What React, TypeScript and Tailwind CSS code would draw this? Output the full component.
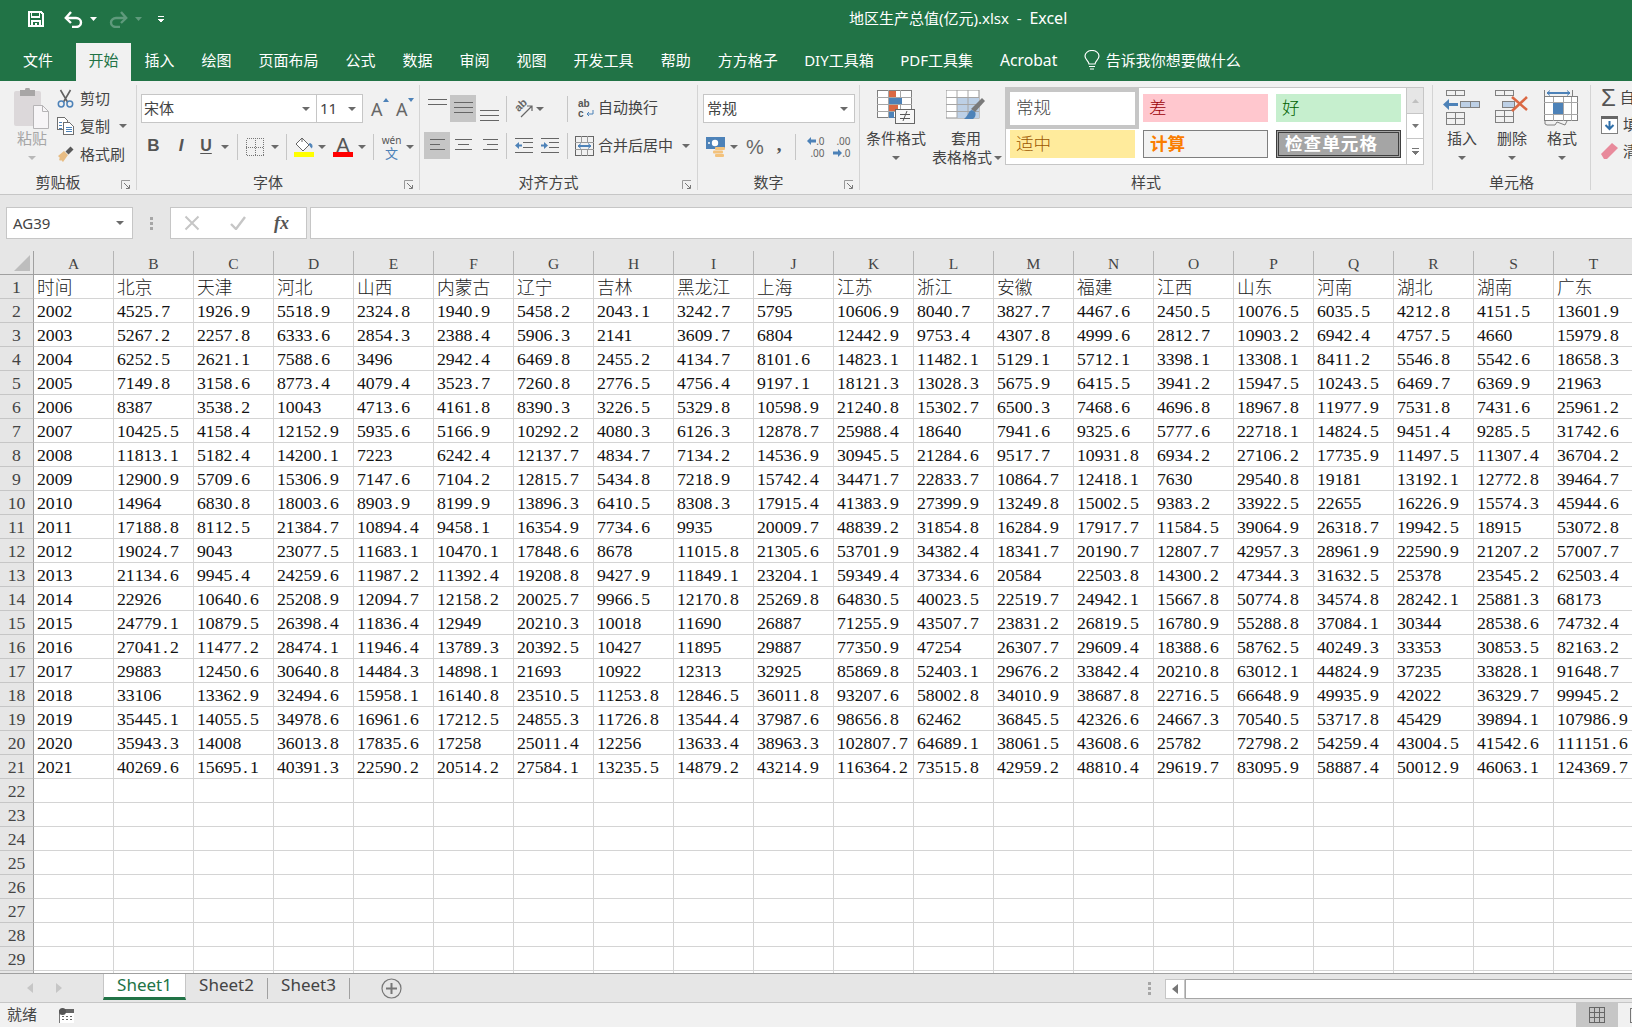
import React from "react";

const COLS = "ABCDEFGHIJKLMNOPQRST".split("");
const HEAD = "时间 北京 天津 河北 山西 内蒙古 辽宁 吉林 黑龙江 上海 江苏 浙江 安徽 福建 江西 山东 河南 湖北 湖南 广东".split(" ");
const DATA = `2002 4525.7 1926.9 5518.9 2324.8 1940.9 5458.2 2043.1 3242.7 5795 10606.9 8040.7 3827.7 4467.6 2450.5 10076.5 6035.5 4212.8 4151.5 13601.9
2003 5267.2 2257.8 6333.6 2854.3 2388.4 5906.3 2141 3609.7 6804 12442.9 9753.4 4307.8 4999.6 2812.7 10903.2 6942.4 4757.5 4660 15979.8
2004 6252.5 2621.1 7588.6 3496 2942.4 6469.8 2455.2 4134.7 8101.6 14823.1 11482.1 5129.1 5712.1 3398.1 13308.1 8411.2 5546.8 5542.6 18658.3
2005 7149.8 3158.6 8773.4 4079.4 3523.7 7260.8 2776.5 4756.4 9197.1 18121.3 13028.3 5675.9 6415.5 3941.2 15947.5 10243.5 6469.7 6369.9 21963
2006 8387 3538.2 10043 4713.6 4161.8 8390.3 3226.5 5329.8 10598.9 21240.8 15302.7 6500.3 7468.6 4696.8 18967.8 11977.9 7531.8 7431.6 25961.2
2007 10425.5 4158.4 12152.9 5935.6 5166.9 10292.2 4080.3 6126.3 12878.7 25988.4 18640 7941.6 9325.6 5777.6 22718.1 14824.5 9451.4 9285.5 31742.6
2008 11813.1 5182.4 14200.1 7223 6242.4 12137.7 4834.7 7134.2 14536.9 30945.5 21284.6 9517.7 10931.8 6934.2 27106.2 17735.9 11497.5 11307.4 36704.2
2009 12900.9 5709.6 15306.9 7147.6 7104.2 12815.7 5434.8 7218.9 15742.4 34471.7 22833.7 10864.7 12418.1 7630 29540.8 19181 13192.1 12772.8 39464.7
2010 14964 6830.8 18003.6 8903.9 8199.9 13896.3 6410.5 8308.3 17915.4 41383.9 27399.9 13249.8 15002.5 9383.2 33922.5 22655 16226.9 15574.3 45944.6
2011 17188.8 8112.5 21384.7 10894.4 9458.1 16354.9 7734.6 9935 20009.7 48839.2 31854.8 16284.9 17917.7 11584.5 39064.9 26318.7 19942.5 18915 53072.8
2012 19024.7 9043 23077.5 11683.1 10470.1 17848.6 8678 11015.8 21305.6 53701.9 34382.4 18341.7 20190.7 12807.7 42957.3 28961.9 22590.9 21207.2 57007.7
2013 21134.6 9945.4 24259.6 11987.2 11392.4 19208.8 9427.9 11849.1 23204.1 59349.4 37334.6 20584 22503.8 14300.2 47344.3 31632.5 25378 23545.2 62503.4
2014 22926 10640.6 25208.9 12094.7 12158.2 20025.7 9966.5 12170.8 25269.8 64830.5 40023.5 22519.7 24942.1 15667.8 50774.8 34574.8 28242.1 25881.3 68173
2015 24779.1 10879.5 26398.4 11836.4 12949 20210.3 10018 11690 26887 71255.9 43507.7 23831.2 26819.5 16780.9 55288.8 37084.1 30344 28538.6 74732.4
2016 27041.2 11477.2 28474.1 11946.4 13789.3 20392.5 10427 11895 29887 77350.9 47254 26307.7 29609.4 18388.6 58762.5 40249.3 33353 30853.5 82163.2
2017 29883 12450.6 30640.8 14484.3 14898.1 21693 10922 12313 32925 85869.8 52403.1 29676.2 33842.4 20210.8 63012.1 44824.9 37235 33828.1 91648.7
2018 33106 13362.9 32494.6 15958.1 16140.8 23510.5 11253.8 12846.5 36011.8 93207.6 58002.8 34010.9 38687.8 22716.5 66648.9 49935.9 42022 36329.7 99945.2
2019 35445.1 14055.5 34978.6 16961.6 17212.5 24855.3 11726.8 13544.4 37987.6 98656.8 62462 36845.5 42326.6 24667.3 70540.5 53717.8 45429 39894.1 107986.9
2020 35943.3 14008 36013.8 17835.6 17258 25011.4 12256 13633.4 38963.3 102807.7 64689.1 38061.5 43608.6 25782 72798.2 54259.4 43004.5 41542.6 111151.6
2021 40269.6 15695.1 40391.3 22590.2 20514.2 27584.1 13235.5 14879.2 43214.9 116364.2 73515.8 42959.2 48810.4 29619.7 83095.9 58887.4 50012.9 46063.1 124369.7`
  .split("\n")
  .map((r) => r.split(" "));
const ROWS: string[][] = [HEAD, ...DATA, ...Array.from({ length: 9 }, () => Array(20).fill(""))];

const Caret = ({ c = "#6a6a6a" }: { c?: string }) => (
  <svg width="8" height="4" viewBox="0 0 8 4" className="shrink-0"><path d="M0 0h8L4 4z" fill={c} /></svg>
);

const Lines = ({ w = 19, y = [0, 5, 10], lens }: { w?: number; y?: number[]; lens?: number[][] }) => (
  <svg width="19" height="14" viewBox="0 0 19 14" shapeRendering="crispEdges">
    {y.map((v, i) => {
      const [a, b] = lens ? lens[i] : [0, w];
      return <rect key={i} x={a} y={v} width={b - a} height="1" fill="#666" />;
    })}
  </svg>
);

const Launcher = () => (
  <svg width="10" height="10" viewBox="0 0 10 10" className="absolute right-[5px] top-[6px]">
    <path d="M0.5 9V0.5H9" fill="none" stroke="#999" />
    <path d="M3 3l5 5M8.5 5v3.5H5" fill="none" stroke="#777" />
  </svg>
);

const Group = ({ label, cls, launcher, children }: { label: string; cls: string; launcher?: boolean; children: React.ReactNode }) => (
  <div className={`${cls} h-[105px] flex flex-col shrink-0 border-r border-[#d4d4d4]`}>
    <div className="h-[89px]">{children}</div>
    <div className={`relative h-[16px] flex items-center justify-center text-[15px] leading-none text-[#444] ${launcher ? "pr-[20px]" : ""}`}>
      {label}
      {launcher && <Launcher />}
    </div>
  </div>
);

const Sep = ({ cls }: { cls: string }) => <div className={`${cls} w-px h-[26px] bg-[#c6c6c6] shrink-0`} />;

const CELL_FONT = "font-['Liberation_Serif','Noto_Sans_CJK_SC',serif]";

const Num = ({ v }: { v: string }) => {
  if (!/^[\d.]+$/.test(v)) return <span className="inline-block translate-y-px font-light text-[#222]">{v}</span>;
  const [a, b] = v.split(".");
  return (
    <span>
      {a.split("").map((d, i) => (
        <span key={i} className="inline-block w-[8.85px]">{d}</span>
      ))}
      {b !== undefined && <span className="inline-block w-[8.85px] pl-[2px]">.</span>}
      {b !== undefined && <span className="inline-block w-[8.85px]">{b}</span>}
    </span>
  );
};

const StyleCell = ({ text, cls }: { text: string; cls: string }) => (
  <div className={`${cls} flex items-center pl-[6px] text-[17.6px] ${CELL_FONT}`}>{text}</div>
);

const BigBtn = ({ icon, cls, children }: { icon: React.ReactNode; cls: string; children: React.ReactNode }) => (
  <div className={`${cls} flex flex-col items-center text-[15px] leading-[19px] text-[#444]`}>
    <div className="h-[44px] flex items-start justify-center pt-[5px]">{icon}</div>
    {children}
  </div>
);

const Tab = ({ t, cls = "px-[13.5px] text-[15px]" }: { t: string; cls?: string }) => (
  <div className={`${cls} h-full flex items-center justify-center text-white pb-[3px] whitespace-nowrap`}>{t}</div>
);

export default function App() {
  return (
    <div className="w-[1632px] h-[1027px] overflow-hidden bg-[#e6e6e6] flex flex-col font-['Noto_Sans','Noto_Sans_CJK_SC',sans-serif] text-[#444]">
      {/* title */}
      <div className="h-[43px] bg-[#217346] flex items-start shrink-0">
        <div className="w-[849px] h-[38px] flex items-center shrink-0 pl-[28px]">
          <svg width="16" height="16" viewBox="0 0 16 16" shapeRendering="crispEdges">
            <path fillRule="evenodd" fill="#fff" d="M0 0h13l3 3v13H0zM2 2v12h1V9h10v5h1V4l-2-2v5H3V2zM5 11v3h6v-3zM4 2v3h7V2z" />
            <rect x="7" y="11.5" width="2" height="2.5" fill="#fff" />
          </svg>
          <svg width="19" height="17" viewBox="0 0 19 17" className="ml-[20px]" fill="none" stroke="#fff" strokeWidth="2.4">
            <path d="M2 7h10a5 4.5 0 0 1 0 9H8" />
            <path d="M7 1L1.8 7 7 12" />
          </svg>
          <div className="ml-[7px]"><svg width="7" height="4" viewBox="0 0 7 4"><path d="M0 0h7L3.5 4z" fill="#fff" /></svg></div>
          <svg width="19" height="17" viewBox="0 0 19 17" className="ml-[12px]" fill="none" stroke="#5f9a7c" strokeWidth="2.4">
            <path d="M17 7H7a5 4.5 0 0 0 0 9h4" />
            <path d="M12 1l5.2 6L12 12" />
          </svg>
          <div className="ml-[7px]"><svg width="7" height="4" viewBox="0 0 7 4"><path d="M0 0h7L3.5 4z" fill="#5f9a7c" /></svg></div>
          <svg width="6" height="7" viewBox="0 0 6 7" className="ml-[16px]" shapeRendering="crispEdges"><path d="M0 0h6v1H0zM0 3h6L3 7z" fill="#fff" /></svg>
        </div>
        <div className="h-[36px] flex items-center text-white text-[15px] whitespace-pre">地区生产总值(亿元).xlsx  -  <span className="text-[16px]">Excel</span></div>
      </div>
      {/* tabs */}
      <div className="h-[38px] bg-[#217346] flex items-center shrink-0">
        <Tab t="文件" cls="w-[76px] text-[15px]" />
        <div className="w-[55px] h-full bg-[#f1f1f1] flex items-center justify-center text-[#217346] text-[15px] pb-[3px]">开始</div>
        <Tab t="插入" />
        <Tab t="绘图" />
        <Tab t="页面布局" />
        <Tab t="公式" />
        <Tab t="数据" />
        <Tab t="审阅" />
        <Tab t="视图" />
        <Tab t="开发工具" />
        <Tab t="帮助" />
        <Tab t="方方格子" />
        <Tab t="DIY工具箱" cls="px-[13px] text-[15px]" />
        <Tab t="PDF工具集" cls="px-[13.5px] text-[15px]" />
        <Tab t="Acrobat" cls="px-[13.5px] text-[15.7px]" />
        <svg width="16" height="21" viewBox="0 0 16 21" className="ml-[13px] mb-[3px]" fill="none" stroke="#fff" strokeWidth="1.2">
          <path d="M5 14c0-3-4-4-4-8a7 5.5 0 0 1 14 0c0 4-4 5-4 8z" />
          <path d="M5 16.5h6M6 19h4" />
        </svg>
        <div className="ml-[6px] text-white text-[15px] pb-[3px]">告诉我你想要做什么</div>
      </div>
      {/* ribbon */}
      <div className="h-[114px] bg-[#f1f1f1] border-b border-[#c6c6c6] pt-[4px] flex shrink-0 overflow-hidden">
        {/* clipboard */}
        <Group label="剪贴板" cls="w-[137px]" launcher>
          <div className="flex">
            <div className="w-[57px] flex flex-col items-center pt-[3px] pl-[7px]">
              <svg width="36" height="41" viewBox="0 0 36 41">
                <rect x="0" y="3" width="27" height="35" rx="2" fill="#dcd8da" />
                <path d="M6 2h5a2.5 2.5 0 0 1 5 0h5v6H6z" fill="#a8a6a6" />
                <path d="M19.5 17.5h9l6 6v17h-15z" fill="#f7f5f7" stroke="#b6b4b6" />
                <path d="M28.5 17.5v6h6" fill="none" stroke="#b6b4b6" />
              </svg>
              <div className="text-[15px] leading-[20px] text-[#a6a6a6] -mt-[1px]">粘贴</div>
              <div className="mt-[8px]"><Caret c="#b8b8b8" /></div>
            </div>
            <div className="flex flex-col -mt-[1px]">
              <div className="h-[28px] flex items-center">
                <svg width="17" height="19" viewBox="0 0 17 19" fill="none">
                  <path d="M3.5 1l7 12M13.5 1l-7 12" stroke="#606060" strokeWidth="1.6" />
                  <circle cx="4.2" cy="15" r="2.9" stroke="#4d82b8" strokeWidth="1.5" />
                  <circle cx="12.8" cy="15" r="2.9" stroke="#4d82b8" strokeWidth="1.5" />
                </svg>
                <span className="ml-[6px] text-[15px]">剪切</span>
              </div>
              <div className="h-[28px] flex items-center">
                <svg width="17" height="18" viewBox="0 0 17 18" fill="none" shapeRendering="crispEdges">
                  <path d="M.5.5h7l3 3v9H.5z" stroke="#6f6f6f" fill="#fff" />
                  <path d="M6.5 5.5h6l4 4v8h-10z" stroke="#6f6f6f" fill="#fff" />
                  <path d="M2 5h3M2 8h3M2 11h3M8.5 10.5h6M8.5 12.5h6M8.5 14.5h6" stroke="#4d82b8" />
                </svg>
                <span className="ml-[6px] text-[15px]">复制</span>
                <div className="ml-[9px]"><Caret /></div>
              </div>
              <div className="h-[28px] flex items-center">
                <svg width="17" height="17" viewBox="0 0 17 17">
                  <path d="M1 10l6-5 4 4-5 7-2-2-1 1-1-2 1-1z" fill="#e8bd84" />
                  <path d="M8.5 5.5l5-5 3 3-5 5z" fill="#595959" />
                </svg>
                <span className="ml-[6px] text-[15px]">格式刷</span>
              </div>
            </div>
          </div>
        </Group>
        {/* font */}
        <Group label="字体" cls="w-[283px]" launcher>
          <div className="pl-[4px] pt-[9px] flex items-center">
            <div className="w-[176px] h-[29px] bg-white border border-[#c6c6c6] flex items-center justify-between pl-[2px] pr-[6px] text-[15px]">
              <span className="font-['Noto_Sans_CJK_SC',sans-serif] pb-[1px]">宋体</span><Caret />
            </div>
            <div className="-ml-px w-[47px] h-[29px] bg-white border border-[#c6c6c6] flex items-center justify-between pl-[3px] pr-[6px] text-[15px]">
              <span>11</span><Caret />
            </div>
            <div className="relative ml-[8px] w-[17px] text-[18px] leading-none text-[#666]">
              A
              <svg width="6" height="4" viewBox="0 0 6 4" className="absolute right-[-1px] top-[-2px]"><path d="M0 4h6L3 0z" fill="#4d82b8" /></svg>
            </div>
            <div className="relative ml-[8px] w-[17px] text-[18px] leading-none text-[#666]">
              A
              <svg width="6" height="4" viewBox="0 0 6 4" className="absolute right-[-1px] top-[-2px]"><path d="M0 0h6L3 4z" fill="#4d82b8" /></svg>
            </div>
          </div>
          <div className="pl-[4px] mt-[10px] h-[27px] flex items-center">
            <div className="w-[25px] text-center font-['Liberation_Sans',sans-serif] font-bold text-[17px] text-[#555] pb-[1px]">B</div>
            <div className="w-[26px] ml-[2px] text-center font-['Liberation_Sans',sans-serif] font-bold italic text-[17px] text-[#555] pb-[1px]">I</div>
            <div className="w-[24px] text-center font-['Liberation_Sans',sans-serif] font-bold text-[16px] text-[#555] underline underline-offset-2 pb-[1px]">U</div>
            <div className="ml-[3px]"><Caret /></div>
            <Sep cls="ml-[8px]" />
            <svg width="18" height="18" viewBox="0 0 18 18" className="ml-[8px]" shapeRendering="crispEdges" fill="none" stroke="#777" strokeDasharray="1 1">
              <rect x=".5" y=".5" width="17" height="17" />
              <path d="M9 0v18M0 9h18" />
            </svg>
            <div className="ml-[7px]"><Caret /></div>
            <Sep cls="ml-[7px]" />
            <div className="ml-[7px] flex flex-col items-center w-[20px]">
              <svg width="20" height="16" viewBox="0 0 20 16" fill="none">
                <path d="M8 1l7 7-6 6-7-7z" stroke="#666" fill="#fff" />
                <path d="M8 1V5" stroke="#666" />
                <path d="M15 7c2-1 3 0 3 3 0 1-1 1-1 0z" fill="#4d82b8" stroke="#4d82b8" />
              </svg>
              <div className="w-[20px] h-[5px] bg-[#ffff00] -mt-px" />
            </div>
            <div className="ml-[4px]"><Caret /></div>
            <div className="ml-[7px] w-[20px] flex flex-col items-center">
              <div className="h-[16px] flex items-center text-[20px] leading-none font-['Liberation_Sans',sans-serif] text-[#555]">A</div>
              <div className="w-[20px] h-[5px] bg-[#ff0000] -mt-px" />
            </div>
            <div className="ml-[5px]"><Caret /></div>
            <Sep cls="ml-[7px]" />
            <div className="ml-[8px] w-[19px] flex flex-col items-center leading-none">
              <span className="text-[10px] text-[#555] leading-[12px]">wén</span>
              <span className="text-[13px] text-[#4d82b8] leading-[14px]">文</span>
            </div>
            <div className="ml-[5px]"><Caret /></div>
          </div>
        </Group>
        {/* alignment */}
        <Group label="对齐方式" cls="w-[278px]" launcher>
          <div className="pl-[4px] pt-[10px] h-[37px] flex items-start">
            <div className="w-[26px] h-[27px] flex items-start justify-center pt-[4px]"><Lines y={[0, 5]} /></div>
            <div className="w-[26px] h-[27px] bg-[#c6c6c6] flex items-center justify-center"><Lines /></div>
            <div className="w-[26px] h-[27px] flex items-end justify-center pb-[1px]"><Lines y={[3, 8, 13]} /></div>
            <div className="h-[27px] flex items-center"><Sep cls="ml-[4px]" /></div>
            <div className="h-[27px] flex items-center ml-[7px]">
              <div className="relative w-[19px] h-[19px]">
                <span className="absolute left-0 top-0 -rotate-45 text-[11px] leading-[12px] font-bold text-[#666] font-['Liberation_Sans',sans-serif]">ab</span>
                <svg width="19" height="19" viewBox="0 0 19 19" fill="none" stroke="#666" strokeWidth="1.2" className="absolute left-0 top-0">
                  <path d="M7 18L18 7M13 7h5v5" />
                </svg>
              </div>
              <div className="ml-[3px]"><Caret /></div>
            </div>
            <div className="h-[27px] flex items-center"><Sep cls="ml-[23px]" /></div>
            <div className="h-[27px] flex items-center ml-[10px]">
              <div className="w-[18px] font-['Liberation_Sans',sans-serif] font-bold text-[10px] leading-[10px] text-[#555] flex flex-col">
                <span>ab</span>
                <span className="flex items-center">c
                  <svg width="9" height="8" viewBox="0 0 9 8" fill="none" stroke="#4d82b8" className="ml-[1px]"><path d="M8 0v4H2M4 2L2 4l2 2" /></svg>
                </span>
              </div>
              <span className="ml-[2px] text-[15px] whitespace-nowrap pb-[2px]">自动换行</span>
            </div>
          </div>
          <div className="pl-[4px] mt-[10px] h-[27px] flex items-center">
            <div className="w-[26px] h-[27px] bg-[#c6c6c6] flex items-center justify-center"><Lines lens={[[2, 17], [2, 12], [2, 17]]} /></div>
            <div className="w-[26px] h-[27px] flex items-center justify-center"><Lines lens={[[1, 18], [4, 15], [1, 18]]} /></div>
            <div className="w-[26px] h-[27px] flex items-center justify-center"><Lines lens={[[3, 18], [7, 18], [3, 18]]} /></div>
            <Sep cls="ml-[4px]" />
            <svg width="18" height="15" viewBox="0 0 18 15" className="ml-[8px]" shapeRendering="geometricPrecision">
              <path d="M0 .5h18M8 4.5h10M8 9.5h10M0 14.5h18" stroke="#666" fill="none" />
              <path d="M0 7.5L4 4v2.5h3v2H4V11z" fill="#4d82b8" />
            </svg>
            <svg width="18" height="15" viewBox="0 0 18 15" className="ml-[8px]">
              <path d="M0 .5h18M8 4.5h10M8 9.5h10M0 14.5h18" stroke="#666" fill="none" />
              <path d="M7 7.5L3 4v2.5H0v2h3V11z" fill="#4d82b8" />
            </svg>
            <Sep cls="ml-[8px]" />
            <svg width="19" height="20" viewBox="0 0 19 20" className="ml-[7px]" fill="none" shapeRendering="crispEdges">
              <rect x=".5" y=".5" width="18" height="19" stroke="#666" />
              <path d="M0 6.5h19M0 13.5h19M6.5 0v6M12.5 0v6M6.5 14v6M12.5 14v6" stroke="#999" />
              <path d="M3 10h13" stroke="#4d82b8" strokeWidth="1.5" />
              <path d="M6 7.5L3 10l3 2.5M13 7.5l3 2.5-3 2.5" stroke="#4d82b8" shapeRendering="auto" />
            </svg>
            <span className="ml-[4px] text-[15px] whitespace-nowrap pb-[1px]">合并后居中</span>
            <div className="ml-[9px]"><Caret /></div>
          </div>
        </Group>
        {/* number */}
        <Group label="数字" cls="w-[162px]" launcher>
          <div className="pl-[5px] pt-[9px]">
            <div className="w-[152px] h-[29px] bg-white border border-[#c6c6c6] flex items-center justify-between pl-[3px] pr-[6px] text-[15px]">
              <span className="pb-[1px]">常规</span><Caret />
            </div>
          </div>
          <div className="pl-[8px] mt-[10px] h-[27px] flex items-center">
            <svg width="19" height="20" viewBox="0 0 19 20">
              <rect x="0" y="0" width="19" height="12" fill="#4d82b8" />
              <circle cx="9" cy="6" r="3.2" fill="#fff" />
              <circle cx="3" cy="6" r="1" fill="#fff" />
              <rect x="9" y="10" width="10" height="3" rx="1" fill="#f3c27c" />
              <rect x="7" y="13.5" width="10" height="3" rx="1" fill="#f3c27c" />
              <rect x="9" y="17" width="9" height="3" rx="1" fill="#f3c27c" />
            </svg>
            <div className="ml-[5px]"><Caret /></div>
            <span className="ml-[8px] text-[20px] leading-none text-[#666] font-['Liberation_Sans',sans-serif]">%</span>
            <span className="ml-[13px] text-[19px] leading-none font-bold text-[#555] font-['Liberation_Serif',serif] pb-[4px]">,</span>
            <Sep cls="ml-[13px]" />
            <div className="ml-[9px] w-[20px] text-[10px] leading-[12px] text-[#666] flex flex-col items-end">
              <span className="flex items-center">
                <svg width="9" height="8" viewBox="0 0 9 8"><path d="M0 4l4-4v2.5h5v3H4V8z" fill="#4d82b8" /></svg>.0
              </span>
              <span>.00</span>
            </div>
            <div className="ml-[6px] w-[20px] text-[10px] leading-[12px] text-[#666] flex flex-col items-end">
              <span>.00</span>
              <span className="flex items-center">
                <svg width="9" height="8" viewBox="0 0 9 8"><path d="M9 4L5 0v2.5H0v3h5V8z" fill="#4d82b8" /></svg>.0
              </span>
            </div>
          </div>
        </Group>
        {/* styles */}
        <Group label="样式" cls="w-[573px]">
          <div className="flex">
            <BigBtn cls="w-[70px] ml-[1px]" icon={
              <svg width="38" height="34" viewBox="0 0 38 34" shapeRendering="crispEdges" fill="none">
                <rect x=".5" y=".5" width="34" height="27" stroke="#808080" fill="#fff" />
                <path d="M11.5 0v28M23.5 0v28M0 7.5h35M0 14.5h35M0 21.5h35" stroke="#a6a6a6" />
                <rect x="12" y="1" width="7" height="6" fill="#da6843" />
                <rect x="12" y="8" width="13" height="6" fill="#4d82b8" />
                <rect x="12" y="15" width="9" height="6" fill="#da6843" />
                <rect x="12" y="22" width="5" height="6" fill="#4d82b8" />
                <rect x="18.5" y="19.5" width="19" height="14" fill="#f7f7f7" stroke="#666" />
                <path d="M23 24.5h10M23 28.5h10" stroke="#555" />
                <path d="M26 31l4-10" stroke="#555" shapeRendering="auto" />
              </svg>
            }>
              <span>条件格式</span>
              <div className="mt-[8px]"><Caret /></div>
            </BigBtn>
            <BigBtn cls="w-[70px] relative" icon={
              <svg width="40" height="36" viewBox="0 0 40 36" fill="none">
                <rect x="0" y="0" width="33" height="28" fill="#fff" stroke="#909090" />
                <rect x="11" y="8" width="22" height="20" fill="#bdd0e6" />
                <path d="M11 0v28M22 0v28M0 7.5h33M0 14.5h33M0 21.5h33" stroke="#a6a6a6" />
                <path d="M39 11L29 22l-4-3 11-11z" fill="#7a7a7a" />
                <path d="M26 20c-4 1-3 5-8 9h9c3-2 3-6 2-7z" fill="#4d82b8" />
              </svg>
            }>
              <span>套用</span>
              <span className="whitespace-nowrap flex items-center pl-[2px]">表格格式<span className="ml-[2px]"><Caret /></span></span>
            </BigBtn>
            <div className="ml-[4px] mt-[2px] w-[419px] h-[78px] bg-white border border-[#c6c6c6] flex">
              <div className="w-[400px] shrink-0 grid grid-cols-[133px_133px_133px] grid-rows-[41px_36px]">
                <StyleCell text="常规" cls="border-[4px] border-[#c6c6c6] text-[#444] pl-[1px] font-light" />
                <StyleCell text="差" cls="mx-[4px] mt-[6px] h-[28px] bg-[#ffc7ce] text-[#9c0006] font-light" />
                <StyleCell text="好" cls="mx-[4px] mt-[6px] h-[28px] bg-[#c6efce] text-[#006100] font-light" />
                <StyleCell text="适中" cls="mx-[4px] mt-[1px] h-[28px] bg-[#ffeb9c] text-[#9c5700] font-light" />
                <StyleCell text="计算" cls="mx-[4px] mt-[1px] h-[28px] bg-[#f2f2f2] border border-[#7f7f7f] text-[#fa7d00] font-bold" />
                <StyleCell text="检查单元格" cls="mx-[4px] mt-[1px] h-[28px] bg-[#a5a5a5] border-[3px] border-double border-[#3f3f3f] text-white font-bold tracking-[1px] pl-[3px]" />
              </div>
              <div className="flex-1 flex flex-col border-l border-[#c6c6c6]">
                <div className="h-[26px] bg-[#e6e6e6] border-b border-[#c6c6c6] flex items-center justify-center">
                  <svg width="7" height="4" viewBox="0 0 7 4"><path d="M0 4h7L3.5 0z" fill="#c0c0c0" /></svg>
                </div>
                <div className="h-[25px] border-b border-[#c6c6c6] flex items-center justify-center">
                  <svg width="7" height="4" viewBox="0 0 7 4"><path d="M0 0h7L3.5 4z" fill="#777" /></svg>
                </div>
                <div className="flex-1 flex items-center justify-center">
                  <svg width="7" height="7" viewBox="0 0 7 7" shapeRendering="crispEdges"><path d="M0 0h7v1H0zM0 3h7L3.5 7z" fill="#777" /></svg>
                </div>
              </div>
            </div>
          </div>
        </Group>
        {/* cells */}
        <Group label="单元格" cls="w-[158px]">
          <div className="flex pl-[4px]">
            <BigBtn cls="w-[50px]" icon={
              <svg width="38" height="35" viewBox="0 0 38 35" fill="none" shapeRendering="crispEdges">
                <path d="M3.5.5h18v5h-18zM12.5 0v6M3.5 22.5h18v12h-18zM12.5 22v12M3 28.5h19" stroke="#808080" />
                <rect x="17.5" y="11.5" width="19" height="6" fill="#bdd0e6" stroke="#808080" />
                <path d="M27 11v7" stroke="#808080" />
                <path d="M0 14.5L6 9v4h9v3H6v4z" fill="#4d82b8" shapeRendering="auto" />
              </svg>
            }>
              <span>插入</span>
              <div className="mt-[8px]"><Caret /></div>
            </BigBtn>
            <BigBtn cls="w-[50px]" icon={
              <svg width="38" height="35" viewBox="0 0 38 35" fill="none" shapeRendering="crispEdges">
                <path d="M2.5.5h18v5h-18zM11.5 0v6M2.5 20.5h18v12h-18zM11.5 20v12M2 26.5h19" stroke="#808080" />
                <rect x="9.5" y="11.5" width="12" height="6" fill="#bdd0e6" stroke="#808080" />
                <path d="M19 7l15 13M34 7L19 21" stroke="#da6843" strokeWidth="2.6" shapeRendering="auto" />
              </svg>
            }>
              <span>删除</span>
              <div className="mt-[8px]"><Caret /></div>
            </BigBtn>
            <BigBtn cls="w-[50px]" icon={
              <svg width="36" height="37" viewBox="0 0 36 37" fill="none" shapeRendering="crispEdges">
                <path d="M.5 0v6M28.5 0v6" stroke="#808080" />
                <path d="M3 3h23" stroke="#4d82b8" strokeWidth="1.5" />
                <path d="M6 .5L3 3l3 2.5M23 .5L26 3l-3 2.5" stroke="#4d82b8" shapeRendering="auto" />
                <rect x=".5" y="6.5" width="33" height="24" fill="#fff" stroke="#808080" />
                <path d="M9.5 7v24M19 7v24M27 7v24M0 12.5h34M0 24.5h34" stroke="#a6a6a6" />
                <rect x="9" y="13" width="10" height="11" fill="#4d82b8" />
                <path d="M1 31v3l2 1h8l2-3M13 32l8 3 2-4" stroke="#808080" shapeRendering="auto" />
              </svg>
            }>
              <span>格式</span>
              <div className="mt-[8px]"><Caret /></div>
            </BigBtn>
          </div>
        </Group>
        {/* editing */}
        <div className="w-[80px] h-[105px] shrink-0 pl-[10px] flex flex-col text-[15px] whitespace-nowrap">
          <div className="h-[27px] -mt-[1px] flex items-center">
            <span className="w-[18px] text-[24px] leading-none font-['Liberation_Sans',sans-serif] text-[#555]">Σ</span>
            <span className="ml-[4px]">自动求和</span>
          </div>
          <div className="h-[27px] flex items-center">
            <svg width="17" height="18" viewBox="0 0 17 18" fill="none" shapeRendering="crispEdges">
              <rect x=".5" y=".5" width="16" height="17" fill="#fff" stroke="#808080" />
              <rect x="0" y="0" width="17" height="3" fill="#666" />
              <path d="M8.5 5v8M4.5 9l4 4 4-4" stroke="#2f6fa9" strokeWidth="2" shapeRendering="auto" />
            </svg>
            <span className="ml-[5px]">填充</span>
          </div>
          <div className="h-[27px] flex items-center">
            <svg width="17" height="17" viewBox="0 0 17 17"><path d="M0 11L11 0l6 5L6 16H3z" fill="#e88a9b" /></svg>
            <span className="ml-[5px]">清除</span>
          </div>
        </div>
      </div>
      {/* formula bar */}
      <div className="h-[56px] shrink-0 pt-[12px] pl-[6px] flex items-start bg-[#e6e6e6]">
        <div className="w-[127px] h-[32px] bg-white border border-[#c6c6c6] flex items-center justify-between pl-[6px] pr-[8px] text-[15px]">
          <span>AG39</span><Caret />
        </div>
        <div className="w-[37px] h-[32px] flex flex-col items-center justify-center gap-[2px]">
          <div className="w-[3px] h-[3px] bg-[#a6a6a6]" />
          <div className="w-[3px] h-[3px] bg-[#a6a6a6]" />
          <div className="w-[3px] h-[3px] bg-[#a6a6a6]" />
        </div>
        <div className="w-[137px] h-[32px] bg-white border border-[#c6c6c6] flex items-center">
          <svg width="16" height="16" viewBox="0 0 16 16" className="ml-[13px]"><path d="M1.5 1.5l13 13M14.5 1.5l-13 13" stroke="#c6c6c6" strokeWidth="2" /></svg>
          <svg width="16" height="14" viewBox="0 0 16 14" className="ml-[30px]"><path d="M1 8l5 5L15 1" stroke="#c6c6c6" strokeWidth="2.4" fill="none" /></svg>
          <span className="ml-[28px] font-['Liberation_Serif',serif] italic font-bold text-[18px] text-[#555] leading-none">fx</span>
        </div>
        <div className="ml-[3px] flex-1 h-[32px] bg-white border border-[#c6c6c6] border-r-0" />
      </div>
      {/* grid */}
      <div className={`h-[722px] shrink-0 overflow-hidden bg-white text-[17.7px] leading-none ${CELL_FONT} text-[#111]`}>
        <div className="grid grid-cols-[34px_repeat(20,80px)] auto-rows-[24px] w-[1634px]">
          <div className="bg-[#e6e6e6] border-r border-b border-[#a0a0a0] flex items-end justify-end pr-[3px] pb-[3px]">
            <svg width="16" height="16" viewBox="0 0 16 16"><path d="M16 0v16H0z" fill="#bdbdbd" /></svg>
          </div>
          {COLS.map((c) => (
            <div key={c} className="bg-[#e6e6e6] border-r border-b border-r-[#b5b5b5] border-b-[#a0a0a0] flex items-center justify-center text-[15.5px] pt-[3px] text-[#444]">{c}</div>
          ))}
          {ROWS.map((row, r) => (
            <React.Fragment key={r}>
              <div className="bg-[#e6e6e6] border-r border-b border-r-[#a0a0a0] border-b-[#c6c6c6] flex items-center justify-center pt-[3px] text-[#444]">{r + 1}</div>
              {row.map((v, c) => (
                <div key={c} className="border-r border-b border-[#d4d4d4] flex items-center pl-[3px] pt-[3px] whitespace-nowrap overflow-hidden">
                  <Num v={v} />
                </div>
              ))}
            </React.Fragment>
          ))}
        </div>
      </div>
      {/* sheet tabs */}
      <div className="h-[30px] shrink-0 bg-[#e6e6e6] border-t border-[#a0a0a0] border-b border-b-[#c6c6c6] flex items-start">
        <div className="w-[103px] h-[28px] flex items-center pl-[27px] shrink-0">
          <svg width="6" height="10" viewBox="0 0 6 10"><path d="M6 0v10L0 5z" fill="#c6c6c6" /></svg>
          <svg width="6" height="10" viewBox="0 0 6 10" className="ml-[23px]"><path d="M0 0v10l6-5z" fill="#c6c6c6" /></svg>
        </div>
        <div className="w-[83px] h-[26px] bg-white border-x border-[#c6c6c6] border-b-[3px] border-b-[#217346] flex items-center justify-center text-[#217346] text-[17px] leading-none pb-[3px]">Sheet1</div>
        <div className="w-[81px] h-[26px] flex items-center justify-center text-[17px] leading-none pb-[5px]">Sheet2</div>
        <div className="w-px h-[21px] mt-[4px] bg-[#a0a0a0]" />
        <div className="w-[81px] h-[26px] flex items-center justify-center text-[17px] leading-none pb-[5px]">Sheet3</div>
        <div className="w-px h-[21px] mt-[4px] bg-[#a0a0a0]" />
        <svg width="21" height="21" viewBox="0 0 21 21" className="ml-[31px] mt-[4px]" fill="none" stroke="#777">
          <circle cx="10.5" cy="10.5" r="9.5" strokeWidth="1.2" />
          <path d="M10.5 5v11M5 10.5h11" strokeWidth="2" />
        </svg>
        <div className="ml-[746px] w-[3px] mt-[8px] flex flex-col gap-[2px]">
          <div className="h-[3px] bg-[#a6a6a6]" />
          <div className="h-[3px] bg-[#a6a6a6]" />
          <div className="h-[3px] bg-[#a6a6a6]" />
        </div>
        <div className="ml-[14px] mt-[5px] w-[20px] h-[20px] bg-white border border-[#c6c6c6] flex items-center justify-center">
          <svg width="6" height="10" viewBox="0 0 6 10"><path d="M6 0v10L0 5z" fill="#777" /></svg>
        </div>
        <div className="mt-[5px] flex-1 h-[20px] bg-white border border-r-0 border-[#a6a6a6]" />
      </div>
      {/* status */}
      <div className="h-[24px] overflow-hidden bg-[#f1f1f1] flex items-center pl-[7px] text-[15px] whitespace-nowrap">
        <span className="shrink-0 w-[30px] pb-[2px]">就绪</span>
        <svg width="15" height="15" viewBox="0 0 15 15" className="ml-[22px] shrink-0" shapeRendering="crispEdges">
          <rect x="0" y="2" width="15" height="13" fill="#fff" stroke="#777" />
          <rect x="6" y="1" width="9" height="4" fill="#666" />
          <circle cx="3.5" cy="3.5" r="3.5" fill="#555" shapeRendering="auto" />
          <path d="M3 8h2M7 8h2M11 8h2M3 11h2M7 11h2M11 11h2" stroke="#666" />
        </svg>
        <div className="ml-[1502px] w-[42px] h-full bg-[#c6c6c6] flex items-center justify-center shrink-0">
          <svg width="16" height="16" viewBox="0 0 16 16" shapeRendering="crispEdges" fill="none" stroke="#666">
            <rect x=".5" y=".5" width="15" height="15" />
            <path d="M5.5 0v16M10.5 0v16M0 5.5h16M0 10.5h16" />
          </svg>
        </div>
        <div className="ml-[12px] w-[10px] h-[15px] border border-[#777] shrink-0" />
      </div>
    </div>
  );
}
